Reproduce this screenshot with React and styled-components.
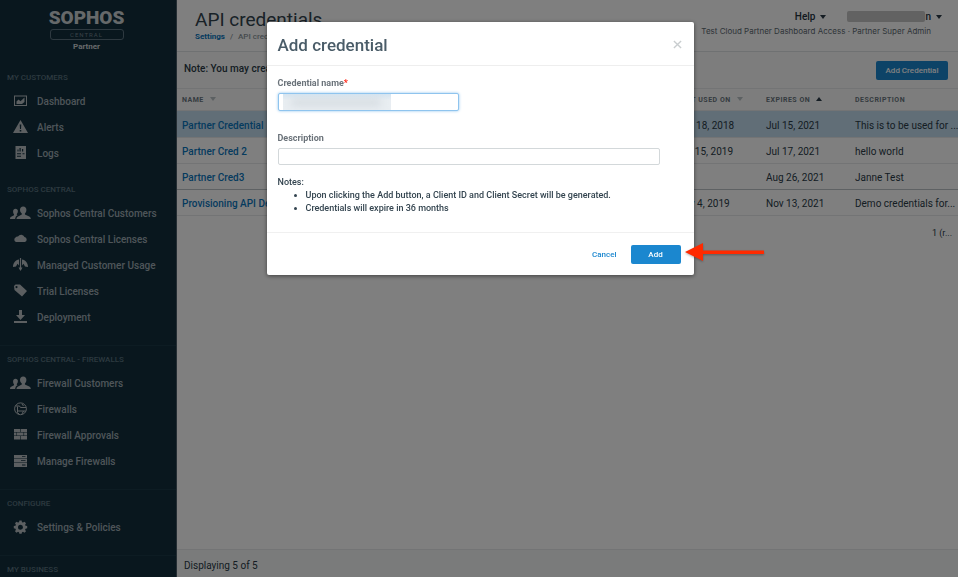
import React, { useState } from "react";
import styled, { createGlobalStyle } from "styled-components";

const GlobalStyle = createGlobalStyle`
  * {
    box-sizing: border-box;
  }
  body {
    margin: 0;
    overflow: hidden;
    font-family: Roboto, "Liberation Sans", sans-serif;
    font-size: 10px;
    line-height: 13px;
    color: #2a3a47;
  }
  button,
  input {
    font-family: inherit;
  }
  a {
    text-decoration: none;
  }
`;

const Page = styled.div`
  display: flex;
  height: 100vh;
  background: #ffffff;
`;

const Sidebar = styled.nav`
  flex: 0 0 177px;
  overflow: hidden;
  background: #122f3d;
  border-right: 1px solid #4a5c68;
`;

const Brand = styled.div`
  display: flex;
  flex-direction: column;
  align-items: center;
  height: 64px;
  padding: 9px 3px 0 0;
  color: #ccd2d5;
`;

const BrandName = styled.div`
  font-size: 19px;
  font-weight: 900;
  line-height: 17px;
`;

const BrandTag = styled.div`
  width: 74px;
  height: 11px;
  margin-top: 3px;
  border: 1px solid #5c7280;
  border-radius: 3px;
  color: #71838e;
  font-size: 6px;
  line-height: 10px;
  letter-spacing: 1px;
  text-align: center;
`;

const BrandRole = styled.div`
  font-size: 8px;
  font-weight: 700;
  line-height: 14px;
`;

const NavSection = styled.section`
  padding: 8px 0 ${({ $compact }) => ($compact ? "10px" : "15px")};
  border-bottom: ${({ $compact }) => ($compact ? "none" : "1px solid #1a3947")};
`;

const NavHeading = styled.h2`
  margin: 0 0 4px;
  padding-left: 7px;
  color: #5b7380;
  font-size: 8px;
  font-weight: 500;
  line-height: 12px;
  text-transform: uppercase;
`;

const NavLink = styled.a`
  display: flex;
  align-items: center;
  height: 26px;
  padding-left: 10px;
  color: #9eabb3;
  font-size: 10px;
  font-weight: 500;

  svg {
    width: 21px;
    height: 14px;
    margin-right: 6px;
    fill: #b8bfc3;
  }
`;

const Main = styled.main`
  flex: 1;
  min-width: 0;
  display: flex;
  flex-direction: column;
`;

const Header = styled.header`
  display: flex;
  justify-content: space-between;
  height: 52px;
  padding: 10px 16px 0 18px;
  border-bottom: 1px solid #dfe3e5;
`;

const PageTitle = styled.h1`
  margin: 0;
  color: #33444f;
  font-size: 19px;
  font-weight: 400;
  line-height: 20px;
`;

const Breadcrumbs = styled.div`
  color: #8b959b;
  font-size: 8px;
  font-weight: 500;
  line-height: 14px;

  a {
    color: #0b76bd;
    font-weight: 700;
  }
  span {
    margin: 0 3px;
  }
`;

const Account = styled.div`
  display: flex;
  flex-direction: column;
  align-items: flex-end;
`;

const AccountMenus = styled.div`
  display: flex;
  gap: 21px;
`;

const MenuButton = styled.button`
  display: flex;
  align-items: center;
  gap: 5px;
  padding: 0;
  border: 0;
  background: none;
  color: #24343f;
  font-size: 10px;
  font-weight: 500;
  line-height: 13px;
`;

const MaskedName = styled.span`
  width: 78px;
  height: 11px;
  margin-right: -5px;
  border-radius: 2px;
  background: #c4c4c4;
`;

const AccountInfo = styled.div`
  padding-right: 11px;
  margin-top: 1px;
  color: #5c6971;
  font-family: Inter, sans-serif;
  font-size: 8px;
  line-height: 14px;
`;

const Caret = styled.span`
  border: 3px solid transparent;
  border-top: ${({ $up }) => ($up ? "0" : "4px")} solid ${({ $color }) => $color || "#2a3a47"};
  border-bottom: ${({ $up }) => ($up ? "4px" : "0")} solid ${({ $color }) => $color || "#2a3a47"};
  border-left-color: transparent;
  border-right-color: transparent;
  display: inline-block;
`;

const Toolbar = styled.div`
  display: flex;
  justify-content: space-between;
  height: 37px;
  padding: 9px 10px 0 7px;
  background: #fafbfb;
  border-bottom: 1px solid #e6e9ea;
  font-weight: 500;
  white-space: nowrap;
`;

const ToolbarNote = styled.div`
  padding-top: 1px;
`;

const PrimaryButton = styled.button`
  width: ${({ $wide }) => ($wide ? "72px" : "50px")};
  height: 19px;
  padding: 0;
  border: 0;
  border-radius: 2px;
  background: #1b87cf;
  color: #ffffff;
  font-size: 8px;
  font-weight: 500;
`;

const Table = styled.table`
  width: 100%;
  table-layout: fixed;
  border-collapse: separate;
  border-spacing: 0;
`;

const Col = styled.col`
  width: ${({ $width }) => $width || "auto"};
`;

const Th = styled.th`
  height: 22px;
  padding: 2px 0 0 5px;
  background: #fafbfb;
  border-bottom: 1px solid #e6e9ea;
  color: #6b7780;
  font-size: 7px;
  font-weight: 700;
  letter-spacing: 0.5px;
  text-align: left;
  text-transform: uppercase;
  white-space: nowrap;

  ${Caret} {
    margin-left: 4px;
    vertical-align: 1px;
  }
`;

const Row = styled.tr`
  td {
    height: ${({ $selected }) => ($selected ? "27px" : "26px")};
    padding: 2px 0 0 5px;
    overflow: hidden;
    background: ${({ $selected }) => ($selected ? "#c2dcee" : "#ffffff")};
    border-bottom: 1px solid ${({ $divided }) => ($divided ? "#bcc3c7" : "#e6e9ea")};
    white-space: nowrap;
  }
  a {
    color: #0b76bd;
    font-weight: 500;
  }
`;

const Pager = styled.div`
  padding: 11px 6px;
  font-size: 9px;
  text-align: right;
`;

const Footer = styled.footer`
  height: 28px;
  margin-top: auto;
  padding: 9px 7px 0;
  background: #f4f6f6;
  border-top: 1px solid #e6e9ea;
`;

const Overlay = styled.div`
  position: fixed;
  inset: 0;
  padding: 22px 0 0 2px;
  background: rgba(0, 0, 0, 0.5);
`;

const Dialog = styled.div`
  position: relative;
  width: 427px;
  max-width: 100%;
  margin: 0 auto;
  background: #ffffff;
  border-radius: 2px;
  box-shadow: 0 1px 4px rgba(0, 0, 0, 0.5);
  color: #33444f;
`;

const DialogHeader = styled.div`
  display: flex;
  align-items: center;
  justify-content: space-between;
  height: 44px;
  padding: 2px 12px 0 11px;
  border-bottom: 1px solid #eeeeee;
`;

const DialogTitle = styled.h2`
  margin: 0;
  color: #4a5c68;
  font-size: 17px;
  font-weight: 500;
  line-height: 20px;
`;

const CloseButton = styled.button`
  display: flex;
  padding: 0;
  border: 0;
  background: none;

  svg {
    width: 9px;
    height: 9px;
    stroke: #c9cdcf;
    stroke-width: 1.5;
  }
`;

const DialogBody = styled.div`
  padding: 11px 34px 17px 11px;
`;

const Field = styled.div`
  margin-bottom: ${({ $gap }) => $gap};
`;

const Label = styled.label`
  display: block;
  margin-bottom: 3px;
  color: #6b737a;
  font-size: 9px;
  font-weight: 700;
  line-height: 13px;

  span {
    color: #ff2a1a;
  }
`;

const InputWrap = styled.div`
  position: relative;
`;

const TextInput = styled.input`
  display: block;
  width: ${({ $width }) => $width || "100%"};
  height: ${({ $focused }) => ($focused ? "18px" : "17px")};
  padding: 0 5px;
  border: 1px solid ${({ $focused }) => ($focused ? "#8fc4ee" : "#d3d8da")};
  border-radius: 2px;
  box-shadow: ${({ $focused }) => ($focused ? "0 0 3px #8fc4ee" : "none")};
  font-size: 9px;
  outline: none;
`;

const Smudge = styled.div`
  position: absolute;
  top: 1px;
  left: 5px;
  width: 108px;
  height: 16px;
  overflow: hidden;
  background: linear-gradient(#d5e5f1, #e9eef2 40%, #e9eef2);

  &::after {
    content: "";
    position: absolute;
    inset: 6px 10px 5px 8px;
    background: #ccd3d9;
    filter: blur(4px);
  }
`;

const Notes = styled.div`
  font-size: 9px;
  font-weight: 500;

  ul {
    margin: 0;
    padding-left: 28px;
  }
`;

const DialogFooter = styled.div`
  display: flex;
  justify-content: flex-end;
  align-items: center;
  gap: 14px;
  height: 43px;
  padding: 0 13px;
  border-top: 1px solid #f0f0f0;
`;

const TextButton = styled.button`
  padding: 0;
  border: 0;
  background: none;
  color: #1b87cf;
  font-size: 8px;
  font-weight: 500;
`;

const Pointer = styled.svg`
  position: absolute;
  right: -70px;
  bottom: 13px;
  width: 80px;
  height: 20px;
  filter: drop-shadow(0 1px 1px rgba(0, 0, 0, 0.3));
`;

const icons = {
  dashboard: (
    <>
      <path d="M4 1.500h13v10.500H4zM5 2.500v8.500h11V2.500z" fillRule="evenodd" />
      <path d="M6.500 10V7.500l2-2 2 1.700 4-3.700v2L14.500 8 12 10z" />
    </>
  ),
  alert: <path d="M10.500 0 18 13H3zM9.700 4.500l.3 4.500h1l.3-4.500zM9.700 10v1.500h1.600V10z" fillRule="evenodd" />,
  logs: (
    <path
      d="M5.500 0H16v13H5.500zM7.500 5.500h1V3.500h-1zM9.500 5.500h1.200V2H9.500zM12 5.500h1.200V3H12zM7 7.200v1h4v-1zM12.500 7.200v1h2v-1zM7 9.700v1h4v-1z"
      fillRule="evenodd"
    />
  ),
  people: (
    <>
      <path d="M13.200.5c2 0 3.200 1.300 3.200 3.200 0 1.600-.6 2.900-1.500 3.700v1.100l4.300 2c1.200.5 1.500 1.200 1.600 2.500H6.500c.1-1.300.4-2 1.600-2.500l3.700-2V7.400C10.800 6.600 10 5.300 10 3.700 10 1.800 11.200.5 13.200.5z" />
      <path d="M5.500 2.800c1.400 0 2.400.9 2.400 2.300 0 1.200-.4 2.200-1.100 2.900v.8l.8.4c-1.500.8-2.200 1.600-2.500 3.800H0c0-1.200.4-1.800 1.200-2.200l2.800-1.600v-1c-.6-.7-.9-1.600-.9-3 0-1.500 1-2.400 2.400-2.400z" />
    </>
  ),
  cloud: <path d="M6 10A2.500 2.500 0 0 1 5.500 5.500a2.500 2.500 0 0 1 2.500-1A3.700 3.700 0 0 1 14.500 5 2.600 2.600 0 0 1 15 10z" />,
  usage: (
    <>
      <path d="M9.900 0h1.200v12H9.900z" />
      <path d="M9 1.500v6L7.500 5.800 6 8.500 3 9c0-4 2.500-7 6-7.500zM12 1.500v6l1.500-1.700L15 8.500 18 9c0-4-2.500-7-6-7.500z" />
      <path d="M8.500 9.500h4l-2 3.500z" />
    </>
  ),
  tag: <path d="M4 2 5.500.5h4.500l7 6.500-5 5.500L4.500 6zM6.500 2a1.100 1.100 0 1 0 0 2.200 1.100 1.100 0 0 0 0-2.200z" fillRule="evenodd" />,
  download: <path d="M9 0h3v5h3l-4.500 5L6 5h3zM4 11h13v2H4z" />,
  globe: (
    <g fill="none" stroke="#b8bfc3">
      <circle cx="10.500" cy="6.800" r="5.900" />
      <path d="M5.500 4h4l1 1.500h5.500M7.500 4.500v6l1.500 1.500M8 9h7.500M13.500 9l-1.500 3M12 2l1.500 2" />
    </g>
  ),
  bricks: (
    <path d="M4 1h6.200v3H4zM10.800 1H17v3h-6.200zM4 4.600h2.500v2.800H4zM7 4.600h6.500v2.800H7zM14.100 4.600H17v2.800h-2.900zM4 8h6.200v3.500H4zM10.800 8H17v3.500h-6.200z" />
  ),
  servers: (
    <path
      d="M4 1h13v3.400H4zM4 5h13v3.400H4zM4 9h13v4H4zM12 2.200v.9h3.500v-.9zM11 6.200v.9h4.500v-.9zM12 10.500v.9h3.500v-.9z"
      fillRule="evenodd"
    />
  ),
  gear: (
    <path
      d="M9.400.5h2.200l.4 1.700 1 .4 1.500-.9L16 3.200l-.9 1.500.4 1 1.700.4v2.200l-1.700.4-.4 1 .9 1.500-1.500 1.500-1.500-.9-1 .4-.4 1.600H9.400L9 12.200l-1-.4-1.500.9L5 11.200l.9-1.500-.4-1-1.700-.4V6.100l1.700-.4.4-1L5 3.200l1.500-1.500 1.500.9 1-.4zM10.500 4.700a2.500 2.500 0 1 0 0 5 2.500 2.500 0 0 0 0-5z"
      fillRule="evenodd"
    />
  ),
};

const sections = [
  {
    title: "My Customers",
    compact: true,
    items: [
      ["dashboard", "Dashboard"],
      ["alert", "Alerts"],
      ["logs", "Logs"],
    ],
  },
  {
    title: "Sophos Central",
    items: [
      ["people", "Sophos Central Customers"],
      ["cloud", "Sophos Central Licenses"],
      ["usage", "Managed Customer Usage"],
      ["tag", "Trial Licenses"],
      ["download", "Deployment"],
    ],
  },
  {
    title: "Sophos Central - Firewalls",
    items: [
      ["people", "Firewall Customers"],
      ["globe", "Firewalls"],
      ["bricks", "Firewall Approvals"],
      ["servers", "Manage Firewalls"],
    ],
  },
  { title: "Configure", items: [["gear", "Settings & Policies"]] },
  { title: "My Business", items: [] },
];

const credentials = [
  { name: "Partner Credential", used: "Jun 18, 2018", expires: "Jul 15, 2021", description: "This is to be used for ...", selected: true },
  { name: "Partner Cred 2", used: "Oct 15, 2019", expires: "Jul 17, 2021", description: "hello world" },
  { name: "Partner Cred3", used: "", expires: "Aug 26, 2021", description: "Janne Test", divided: true },
  { name: "Provisioning API Demo", used: "Nov 4, 2019", expires: "Nov 13, 2021", description: "Demo credentials for..." },
];

function SideNav() {
  return (
    <Sidebar>
      <Brand>
        <BrandName>SOPHOS</BrandName>
        <BrandTag>CENTRAL</BrandTag>
        <BrandRole>Partner</BrandRole>
      </Brand>
      {sections.map((section) => (
        <NavSection key={section.title} $compact={section.compact}>
          <NavHeading>{section.title}</NavHeading>
          {section.items.map(([icon, label]) => (
            <NavLink key={label} href="#">
              <svg viewBox="0 0 21 14" aria-hidden="true">{icons[icon]}</svg>
              {label}
            </NavLink>
          ))}
        </NavSection>
      ))}
    </Sidebar>
  );
}

function CredentialsTable() {
  return (
    <Table>
      <colgroup>
        <Col />
        <Col $width="89px" />
        <Col $width="89px" />
        <Col $width="108px" />
      </colgroup>
      <thead>
        <tr>
          <Th>Name <Caret $color="#b9c0c4" /></Th>
          <Th>Last used on <Caret $color="#b9c0c4" /></Th>
          <Th>Expires on <Caret $up /></Th>
          <Th>Description</Th>
        </tr>
      </thead>
      <tbody>
        {credentials.map((item) => (
          <Row key={item.name} $selected={item.selected} $divided={item.divided}>
            <td><a href="#">{item.name}</a></td>
            <td>{item.used}</td>
            <td>{item.expires}</td>
            <td>{item.description}</td>
          </Row>
        ))}
      </tbody>
    </Table>
  );
}

function AddCredentialDialog() {
  const [name, setName] = useState("");
  const [description, setDescription] = useState("");

  return (
    <Overlay>
      <Dialog role="dialog" aria-labelledby="dialog-title">
        <DialogHeader>
          <DialogTitle id="dialog-title">Add credential</DialogTitle>
          <CloseButton aria-label="Close">
            <svg viewBox="0 0 10 10"><path d="M1 1l8 8M9 1L1 9" /></svg>
          </CloseButton>
        </DialogHeader>
        <DialogBody>
          <Field $gap="21px">
            <Label htmlFor="name">Credential name<span>*</span></Label>
            <InputWrap>
              <TextInput id="name" $width="181px" $focused value={name} onChange={(e) => setName(e.target.value)} />
              <Smudge />
            </InputWrap>
          </Field>
          <Field $gap="11px">
            <Label htmlFor="description">Description</Label>
            <TextInput id="description" value={description} onChange={(e) => setDescription(e.target.value)} />
          </Field>
          <Notes>
            Notes:
            <ul>
              <li>Upon clicking the Add button, a Client ID and Client Secret will be generated.</li>
              <li>Credentials will expire in 36 months</li>
            </ul>
          </Notes>
        </DialogBody>
        <DialogFooter>
          <TextButton>Cancel</TextButton>
          <PrimaryButton>Add</PrimaryButton>
        </DialogFooter>
        <Pointer viewBox="0 0 80 20" aria-hidden="true">
          <path d="M1 10 19 1v7.500h61v3.500H19V19z" fill="#ff2a00" />
        </Pointer>
      </Dialog>
    </Overlay>
  );
}

function App() {
  return (
    <>
      <GlobalStyle />
      <Page>
        <SideNav />
        <Main>
          <Header>
            <div>
              <PageTitle>API credentials</PageTitle>
              <Breadcrumbs>
                <a href="#">Settings</a> <span>/</span> API credentials
              </Breadcrumbs>
            </div>
            <Account>
              <AccountMenus>
                <MenuButton>Help <Caret /></MenuButton>
                <MenuButton aria-label="Account"><MaskedName />n <Caret /></MenuButton>
              </AccountMenus>
              <AccountInfo>Test Cloud Partner Dashboard Access · Partner Super Admin</AccountInfo>
            </Account>
          </Header>
          <Toolbar>
            <ToolbarNote>Note: You may create up to 10 credentials.</ToolbarNote>
            <PrimaryButton $wide>Add Credential</PrimaryButton>
          </Toolbar>
          <CredentialsTable />
          <Pager>1 (r...</Pager>
          <Footer>Displaying 5 of 5</Footer>
        </Main>
      </Page>
      <AddCredentialDialog />
    </>
  );
}

export default App;
